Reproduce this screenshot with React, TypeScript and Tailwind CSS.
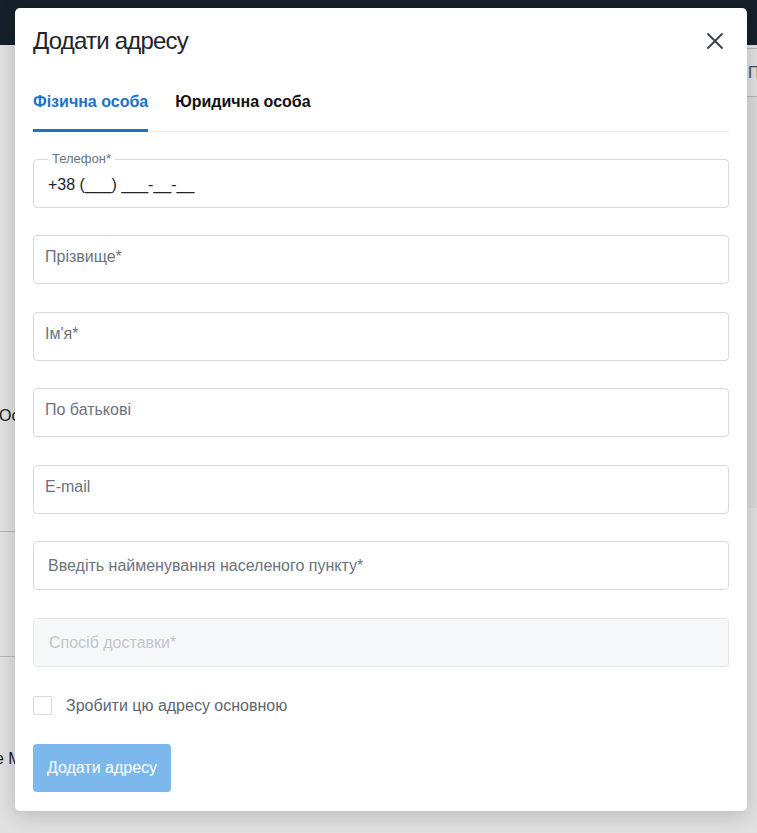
import { X } from 'lucide-react';

const fields = [
  { id: 'surname', label: 'Прізвище*', gap: 'mt-[27px]' },
  { id: 'name', label: "Ім'я*", gap: 'mt-[28px]' },
  { id: 'patronymic', label: 'По батькові', gap: 'mt-[27px]' },
  { id: 'email', label: 'E-mail', gap: 'mt-[28px]' },
];

const App = () => {
  return (
    <div className="relative min-h-screen bg-white font-['Liberation_Sans',Arial,sans-serif] overflow-hidden">
      {/* Page behind the modal */}
      <div className="h-[45px] bg-[#192530]" />
      <div className="flex">
        <div className="w-[15px] shrink-0 overflow-hidden whitespace-nowrap">
          <div className="h-[359px]" />
          <div className="text-[16px] text-[#222] -ml-[1px]">Ос</div>
          <div className="h-[104px] border-b border-[#cfcfcf]" />
          <div className="h-[125px] border-b border-[#cfcfcf]" />
          <div className="mt-[90px] text-[16px] text-[#222] -ml-[5px]">е М</div>
        </div>
        <div className="w-[732px] shrink-0" />
        <div className="flex-1 min-w-0 overflow-hidden whitespace-nowrap">
          <div className="mt-[3px] border-t border-[#cfcfcf]" />
          <div className="h-[48px] flex items-center pl-[1px] text-[16px] text-[#555] border-b border-[#cfcfcf]">П</div>
          <div className="h-[411px] bg-[#f7f7f7]" />
        </div>
      </div>

      {/* Overlay */}
      <div className="absolute inset-0 bg-black/[0.12]" />

      {/* Modal */}
      <div className="absolute left-[15px] top-[8px] w-[732px] rounded-[5px] bg-white px-[18px] pt-[19px] pb-[19px] shadow-[0_4px_20px_rgba(0,0,0,0.18)]">
        <div className="flex items-center justify-between h-[28px]">
          <h2 className="text-[24px] leading-[28px] tracking-[-0.8px] text-[#212529]">Додати адресу</h2>
          <button className="text-[#3c4350]">
            <X size={28} strokeWidth={1.6} />
          </button>
        </div>

        <div className="mt-[18px] flex border-b border-[#e6e8eb]">
          <div className="pt-[19px] pb-[17px] text-[16px] leading-[20px] font-bold text-[#1a73c7] border-b-[3px] border-[#1a73c7] -mb-[1px]">
            Фізична особа
          </div>
          <div className="ml-[27px] pt-[19px] pb-[17px] text-[16px] leading-[20px] font-bold text-[#111]">Юридична особа</div>
        </div>

        <div className="mt-[27px] flex flex-col">
          <div className="relative h-[49px] rounded-[4px] border border-[#d6d9dd] px-[14px] flex items-center pt-[3px]">
            <span className="absolute -top-[9px] left-[14px] bg-white px-[4px] text-[13px] leading-[16px] text-[#6c737d]">
              Телефон*
            </span>
            <span className="text-[16px] text-[#212529]">+38 (___) ___-__-__</span>
          </div>

          {fields.map((field) => (
            <div
              key={field.id}
              className={`${field.gap} h-[49px] rounded-[4px] border border-[#d6d9dd] px-[11px] pt-[10px] text-[16px] leading-[22px] text-[#6c737d]`}
            >
              {field.label}
            </div>
          ))}

          <div className="mt-[27px] h-[49px] rounded-[4px] border border-[#d6d9dd] px-[14px] flex items-center text-[16px] text-[#6c737d]">
            Введіть найменування населеного пункту*
          </div>

          <div className="mt-[28px] h-[49px] rounded-[4px] border border-[#e3e6e9] bg-[#f7f8fa] px-[15px] flex items-center text-[16px] text-[#c2c6cc]">
            Спосіб доставки*
          </div>
        </div>

        <label className="mt-[29px] flex items-center h-[19px]">
          <span className="w-[19px] h-[19px] rounded-[2px] border border-[#d6d9dd] bg-white" />
          <span className="ml-[14px] text-[16px] text-[#5f6670]">Зробити цю адресу основною</span>
        </label>

        <button className="mt-[29px] h-[48px] w-[138px] rounded-[4px] bg-[#7cb8eb] text-[16px] text-white">
          Додати адресу
        </button>
      </div>
    </div>
  );
};

export default App;
